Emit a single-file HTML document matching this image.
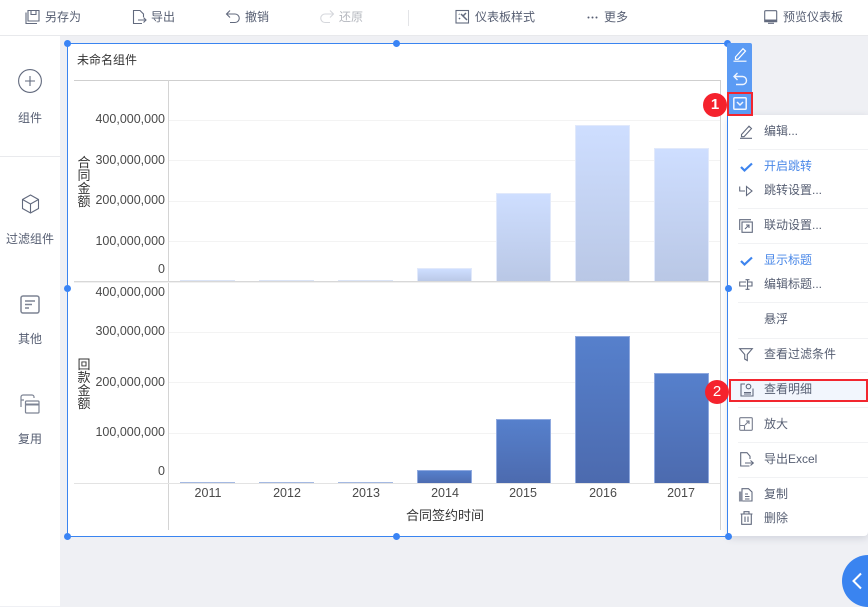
<!DOCTYPE html>
<html><head><meta charset="utf-8">
<style>
html,body{margin:0;padding:0}
body{width:868px;height:606px;position:relative;overflow:hidden;background:#eff0f4;font-family:"Liberation Sans","Noto Sans CJK SC",sans-serif;font-size:12px;color:#565e72}
.a{position:absolute}
.t{position:absolute;white-space:nowrap;line-height:16px;height:16px}
.c{transform:translateX(-50%)}
.m{left:764px}
.y{position:absolute;width:90px;left:75px;text-align:right;font-size:12.5px;line-height:16px;color:#4a4a4a}
.x{position:absolute;width:60px;text-align:center;font-size:12.5px;line-height:16px;color:#4a4a4a}
.b1{position:absolute;width:53px;box-sizing:content-box;border:1px solid #e1e9fb;border-bottom:none;background:linear-gradient(#cedeff,#b9c7e5)}
.b2{position:absolute;width:53px;border:1px solid #8fa9df;border-bottom:none;background:linear-gradient(#5680cc,#4c6aae)}
.sep{position:absolute;left:738px;right:0;height:1px;background:#f1f2f4}
.h{position:absolute;width:7px;height:7px;border-radius:50%;background:#3a84f5}
.v{position:absolute;width:14px;font-size:13px;line-height:13px;color:#333;text-align:center}
svg{position:absolute;overflow:visible}
svg.i{fill:none;stroke:#626a7e;stroke-width:1.100}
</style></head><body>

<!-- top bar -->
<div class="a" style="left:0;top:0;width:868px;height:35px;background:#fff;border-bottom:1px solid #e8e9ec"></div>
<svg class="i" style="left:25px;top:9px" width="16" height="16"><path d="M3 1.500h11v10.500H3zM6 1.500v4h5v-4M1 3.500v11h11"/></svg>
<div class="t" style="left:45px;top:9px">另存为</div>
<svg class="i" style="left:132px;top:9px" width="16" height="16"><path d="M10 14.500H1.500v-13H8l3.500 3.500V8M6 11h8M11.500 8.500L14 11l-2.500 2.500"/></svg>
<div class="t" style="left:151px;top:9px">导出</div>
<svg class="i" style="left:225px;top:9px" width="16" height="16"><path d="M2 5h8a3.500 3.500 0 0 1 0 8.500H5M5 1.500L1.500 5 5 8.500"/></svg>
<div class="t" style="left:245px;top:9px">撤销</div>
<svg class="i" style="left:319px;top:9px;stroke:#d5d7dc" width="16" height="16"><path d="M14 5H6a3.500 3.500 0 0 0 0 8.500h5M11 1.500L14.500 5 11 8.500"/></svg>
<div class="t" style="left:339px;top:9px;color:#b5b8bf">还原</div>
<div class="a" style="left:408px;top:10px;width:1px;height:16px;background:#e3e4e7"></div>
<svg class="i" style="left:455px;top:9px" width="16" height="16"><rect x="1" y="1.500" width="12.500" height="12.500"/><path d="M6 5l6 6M11 4L8 7M4 9l1 1M4 5l.5.5" stroke-width="1.500"/></svg>
<div class="t" style="left:475px;top:9px">仪表板样式</div>
<svg style="left:587px;top:16px" width="11" height="3"><circle cx="1.500" cy="1.500" r="1" fill="#565e72"/><circle cx="5.500" cy="1.500" r="1" fill="#565e72"/><circle cx="9.500" cy="1.500" r="1" fill="#565e72"/></svg>
<div class="t" style="left:604px;top:9px">更多</div>
<svg class="i" style="left:764px;top:10px" width="14" height="14"><rect x=".7" y=".7" width="12" height="9.500" rx="1"/><path d="M.7 10.200h12v1.500H.7z" fill="#626a7e"/><path d="M4 13.300h6"/></svg>
<div class="t" style="left:783px;top:9px">预览仪表板</div>

<!-- sidebar -->
<div class="a" style="left:0;top:36px;width:60px;height:570px;background:#fff"></div>
<div class="a" style="left:0;top:156px;width:60px;height:1px;background:#e9eaed"></div>
<svg class="i" style="left:18px;top:69px" width="24" height="24"><circle cx="12" cy="12" r="11.400"/><path d="M12 7v10M7 12h10"/></svg>
<div class="t c" style="left:30px;top:110px">组件</div>
<svg class="i" style="left:21px;top:194px" width="19" height="20"><path d="M9.500 1l8 4.500v9l-8 4.500-8-4.500v-9zM1.500 5.500l8 4.500 8-4.500M9.500 10v9"/></svg>
<div class="t c" style="left:30px;top:231px">过滤组件</div>
<svg class="i" style="left:20px;top:295px;stroke:#7d8494;stroke-width:1.500" width="20" height="19"><rect x="1" y="1" width="18" height="17" rx="2"/><path d="M5 6h10M5 9.500h7M5 13h4"/></svg>
<div class="t c" style="left:30px;top:331px">其他</div>
<svg class="i" style="left:20px;top:394px;stroke:#7d8494;stroke-width:1.200" width="20" height="20"><path d="M1 13V3a2 2 0 0 1 2-2h9a2 2 0 0 1 2 2v1M1 6h3"/><rect x="5.500" y="7" width="13.500" height="12" rx="1"/><path d="M5.500 10.500h13.500" stroke-width="2"/></svg>
<div class="t c" style="left:30px;top:431px">复用</div>

<!-- chart card -->
<div class="a" style="left:67px;top:43px;width:660px;height:493px;background:#fff"></div>
<div class="t" style="left:77px;top:52px;color:#333">未命名组件</div>
<div class="a" style="left:74px;top:80px;width:647px;height:1px;background:#cfcfcf"></div>
<div class="a" style="left:168px;top:80px;width:1px;height:450px;background:#d4d4d4"></div>
<div class="a" style="left:720px;top:80px;width:1px;height:450px;background:#d0d0d0"></div>

<!-- grid -->
<div class="a" style="left:169px;top:120px;width:551px;height:1px;background:#f3f3f3"></div>
<div class="a" style="left:169px;top:160px;width:551px;height:1px;background:#f3f3f3"></div>
<div class="a" style="left:169px;top:201px;width:551px;height:1px;background:#f3f3f3"></div>
<div class="a" style="left:169px;top:241px;width:551px;height:1px;background:#f3f3f3"></div>
<div class="a" style="left:169px;top:332px;width:551px;height:1px;background:#f3f3f3"></div>
<div class="a" style="left:169px;top:382px;width:551px;height:1px;background:#f3f3f3"></div>
<div class="a" style="left:169px;top:433px;width:551px;height:1px;background:#f3f3f3"></div>

<!-- upper bars -->
<div class="a" style="left:180px;top:280px;width:55px;height:1px;background:#dbe4f6"></div>
<div class="a" style="left:259px;top:280px;width:55px;height:1px;background:#dbe4f6"></div>
<div class="a" style="left:338px;top:280px;width:55px;height:1px;background:#dbe4f6"></div>
<div class="b1" style="left:417px;top:268px;height:13px"></div>
<div class="b1" style="left:496px;top:193px;height:88px"></div>
<div class="b1" style="left:575px;top:125px;height:156px"></div>
<div class="b1" style="left:654px;top:148px;height:133px"></div>
<div class="a" style="left:74px;top:281px;width:646px;height:1px;background:#d8d8d8"></div>
<div class="a" style="left:74px;top:282px;width:646px;height:1px;background:#f0f0f0"></div>

<!-- lower bars -->
<div class="a" style="left:180px;top:482px;width:55px;height:2px;background:#a4b9e2"></div>
<div class="a" style="left:259px;top:482px;width:55px;height:2px;background:#a4b9e2"></div>
<div class="a" style="left:338px;top:482px;width:55px;height:2px;background:#a4b9e2"></div>
<div class="b2" style="left:417px;top:470px;height:13px"></div>
<div class="b2" style="left:496px;top:419px;height:64px"></div>
<div class="b2" style="left:575px;top:336px;height:147px"></div>
<div class="b2" style="left:654px;top:373px;height:110px"></div>
<div class="a" style="left:74px;top:483px;width:646px;height:1px;background:#e3e3e3"></div>

<!-- y labels -->
<div class="y" style="top:111px">400,000,000</div>
<div class="y" style="top:152px">300,000,000</div>
<div class="y" style="top:192px">200,000,000</div>
<div class="y" style="top:233px">100,000,000</div>
<div class="y" style="top:261px">0</div>
<div class="y" style="top:284px">400,000,000</div>
<div class="y" style="top:323px">300,000,000</div>
<div class="y" style="top:374px">200,000,000</div>
<div class="y" style="top:424px">100,000,000</div>
<div class="y" style="top:463px">0</div>
<div class="v" style="left:77px;top:156px">合<br>同<br>金<br>额</div>
<div class="v" style="left:77px;top:358px">回<br>款<br>金<br>额</div>

<!-- x labels -->
<div class="x" style="left:178px;top:485px">2011</div>
<div class="x" style="left:257px;top:485px">2012</div>
<div class="x" style="left:336px;top:485px">2013</div>
<div class="x" style="left:415px;top:485px">2014</div>
<div class="x" style="left:493px;top:485px">2015</div>
<div class="x" style="left:573px;top:485px">2016</div>
<div class="x" style="left:651px;top:485px">2017</div>
<div class="t c" style="left:445px;top:508px;font-size:13px;color:#333">合同签约时间</div>

<!-- context menu -->
<div class="a" style="left:728px;top:115px;width:140px;height:421px;background:#fff;border-radius:0 0 4px 4px;box-shadow:0 2px 8px rgba(60,70,100,.18)"></div>
<div class="sep" style="top:149px"></div>
<div class="sep" style="top:208px"></div>
<div class="sep" style="top:243px"></div>
<div class="sep" style="top:302px"></div>
<div class="sep" style="top:338px"></div>
<div class="sep" style="top:372px"></div>
<div class="sep" style="top:407px"></div>
<div class="sep" style="top:442px"></div>
<div class="sep" style="top:477px"></div>
<div class="a" style="left:729px;top:379px;width:139px;height:23px;box-sizing:border-box;border:2px solid #f2262f;background:#f2f6fd"></div>

<svg class="i" style="left:739px;top:124px" width="14" height="15"><path d="M2.500 10.500L10 2.200l2.500 2.300-7.500 8.200H2.500zM1 14.300h12"/></svg>
<div class="t m" style="top:123px">编辑...</div>
<svg style="left:740px;top:162px;fill:none;stroke:#3d84ee;stroke-width:2.200" width="13" height="10"><path d="M1 5l3.500 3.500L12 1.500"/></svg>
<div class="t m" style="top:158px;color:#4a88e8">开启跳转</div>
<svg class="i" style="left:739px;top:184px" width="14" height="13"><path d="M.7 2.500V7H6M7.500 2.500L13 7l-5.500 4.500z"/></svg>
<div class="t m" style="top:182px">跳转设置...</div>
<svg class="i" style="left:739px;top:219px" width="14" height="14"><path d="M.7 11V.7H12"/><rect x="3" y="3" width="10.300" height="10.300"/><path d="M6 10l4-4M7 6h3v3"/></svg>
<div class="t m" style="top:217px">联动设置...</div>
<svg style="left:740px;top:256px;fill:none;stroke:#3d84ee;stroke-width:2.200" width="13" height="10"><path d="M1 5l3.500 3.500L12 1.500"/></svg>
<div class="t m" style="top:252px;color:#4a88e8">显示标题</div>
<svg class="i" style="left:739px;top:279px" width="14" height="11"><path d="M7 3H.7v4H7M8.500.7v9.600M6.500.7h4M6.500 10.300h4M8.500 3h4.500v4H8.500"/></svg>
<div class="t m" style="top:276px">编辑标题...</div>
<div class="t m" style="top:311px">悬浮</div>
<svg class="i" style="left:739px;top:348px" width="14" height="13"><path d="M.7.700h12.600L8.300 6.500v6L5.700 11V6.500z"/></svg>
<div class="t m" style="top:346px">查看过滤条件</div>
<svg class="i" style="left:740px;top:383px" width="14" height="14"><path d="M5 1H1v12h12V5.500M4 9.500h7M4 11h7"/><circle cx="8.500" cy="3.500" r="2.300"/></svg>
<div class="t m" style="top:381px">查看明细</div>
<svg class="i" style="left:739px;top:417px;stroke:#777d8e" width="14" height="14"><rect x=".7" y=".7" width="12.600" height="12.600" rx="1"/><path d="M6 8l4-4M7 4h3v3M1 8.500h4.500v4.500"/></svg>
<div class="t m" style="top:416px">放大</div>
<svg class="i" style="left:740px;top:452px" width="14" height="15"><path d="M9.500 14H.7V.7H7l3 3.500V7M5 11h8.300M10.500 8.500L13.300 11l-2.800 2.500"/></svg>
<div class="t m" style="top:451px">导出Excel</div>
<svg class="i" style="left:739px;top:488px" width="14" height="14"><path d="M3 13H13V4L9.500.7H3zM6 6h3M6 8.500h4.500M6 11h4.500"/><path d="M.5 4H3V13H.5z" fill="#8a90a0" stroke="#8a90a0"/></svg>
<div class="t m" style="top:486px">复制</div>
<svg class="i" style="left:740px;top:511px" width="13" height="14"><path d="M.5 3h12M4 3V.7h5V3M1.700 3v10.300h9.600V3M5 5.500v5.500M8 5.500v5.500"/></svg>
<div class="t m" style="top:510px">删除</div>

<!-- selection -->
<div class="a" style="left:67px;top:43px;width:661px;height:494px;box-sizing:border-box;border:1px solid #3a84f0;pointer-events:none"></div>
<div class="h" style="left:64px;top:40px"></div>
<div class="h" style="left:393px;top:40px"></div>
<div class="h" style="left:724px;top:40px"></div>
<div class="h" style="left:64px;top:285px"></div>
<div class="h" style="left:725px;top:285px"></div>
<div class="h" style="left:64px;top:533px"></div>
<div class="h" style="left:393px;top:533px"></div>
<div class="h" style="left:725px;top:533px"></div>

<!-- blue toolbar -->
<div class="a" style="left:727px;top:43px;width:25px;height:72px;background:#5b9bf4;border-radius:2px 2px 0 0"></div>
<svg style="left:733px;top:47px;fill:none;stroke:#fff;stroke-width:1.200" width="14" height="15"><path d="M2.500 10L10 1.700 12.500 4 5 12.300H2.500zM.5 14.200h13"/></svg>
<svg style="left:733px;top:72px;fill:none;stroke:#eef4ff;stroke-width:1.400" width="14" height="14"><path d="M1.500 4.500h8a3.700 3.700 0 0 1 0 8H3M4.500 1L1 4.500 4.500 8"/></svg>
<div class="a" style="left:727px;top:92px;width:26px;height:24px;box-sizing:border-box;border:2px solid #f2262f"></div>
<svg style="left:733px;top:97px;fill:none;stroke:#f0f5ff;stroke-width:1.500" width="14" height="13"><rect x=".8" y=".8" width="12.400" height="11.400" rx="1"/><path d="M4 5l3 3 3-3"/></svg>

<!-- badges -->
<div class="a" style="left:703px;top:93px;width:24px;height:24px;border-radius:50%;background:#f5222d;color:#fff;font-size:15px;font-weight:bold;line-height:24px;text-align:center">1</div>
<div class="a" style="left:705px;top:380px;width:24px;height:24px;border-radius:50%;background:#f5222d;color:#fff;font-size:15px;line-height:24px;text-align:center">2</div>

<!-- collapse -->
<div class="a" style="left:842px;top:555px;width:52px;height:52px;border-radius:50%;background:#3a84f0"></div>
<svg style="left:851px;top:572px;fill:none;stroke:#fff;stroke-width:2" width="12" height="18"><path d="M10 1.500L2.500 9l7.500 7.500"/></svg>
</body></html>
